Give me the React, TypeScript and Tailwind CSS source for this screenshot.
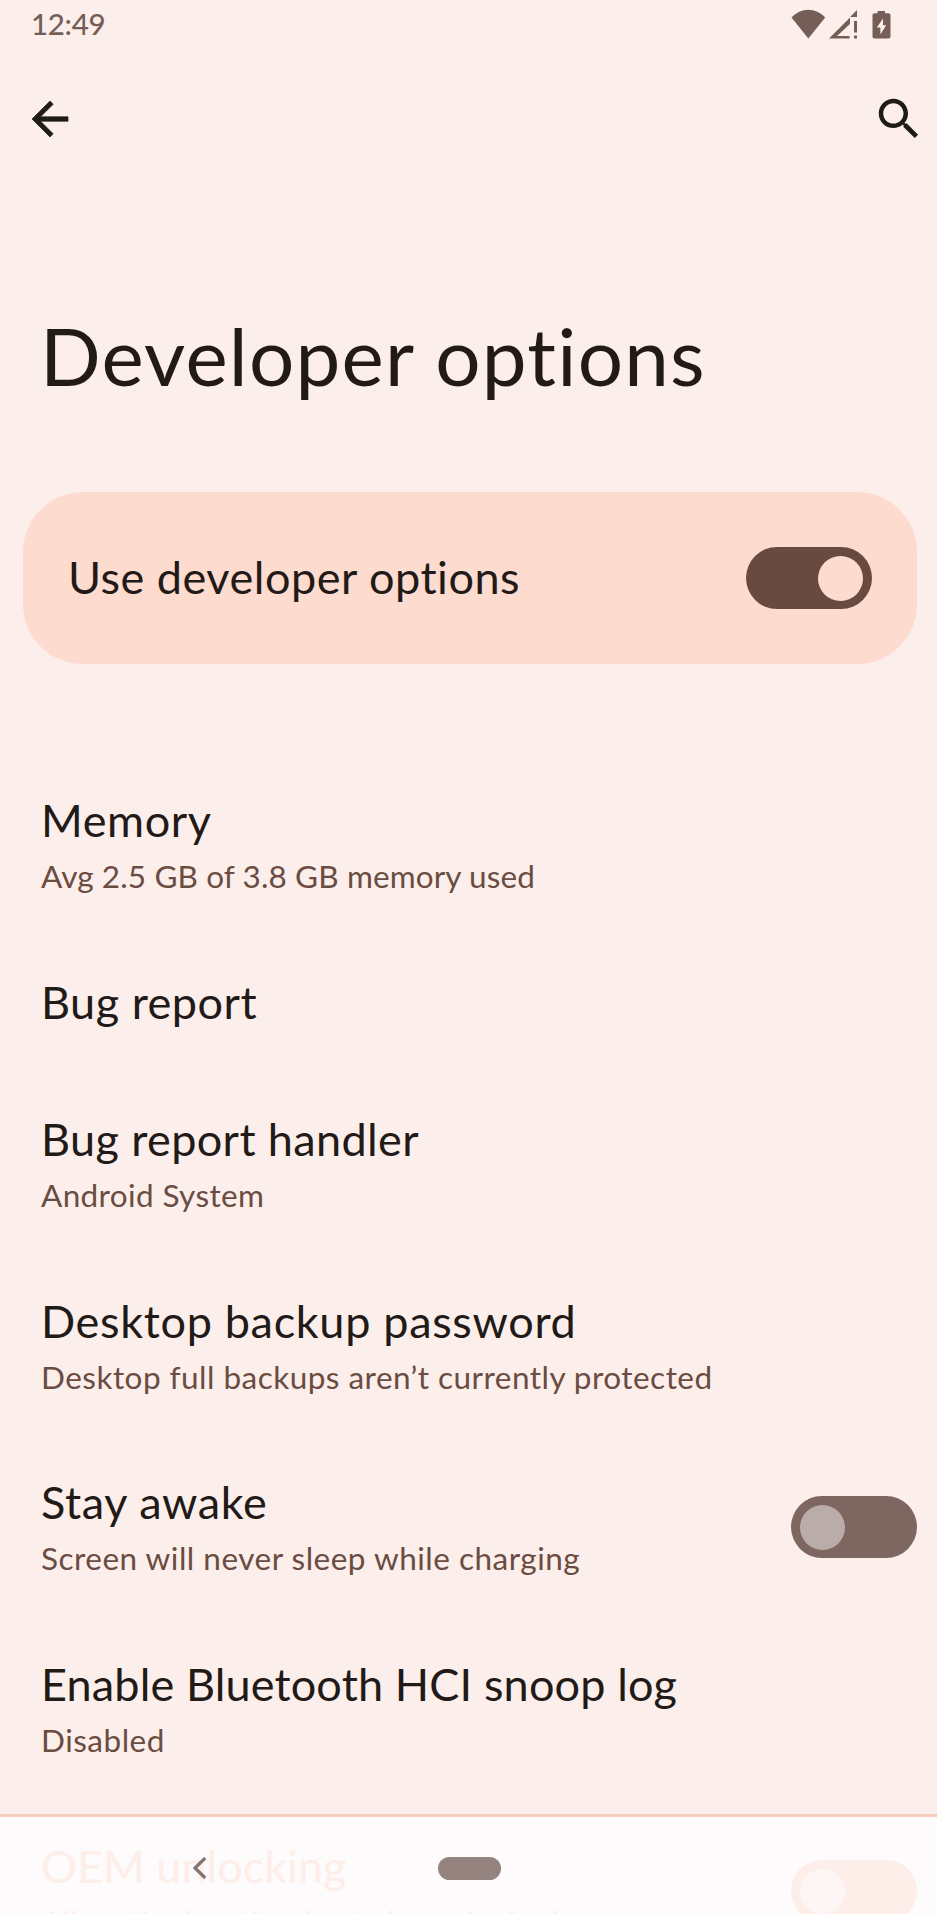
type Option = {
  title: string;
  titleTracking: string;
  summary?: string;
  summaryTracking?: string;
  toggle?: boolean;
};

const options: Option[] = [
  { title: "Memory", titleTracking: "tracking-[0.6px]", summary: "Avg 2.5 GB of 3.8 GB memory used", summaryTracking: "tracking-[0.12px]" },
  { title: "Bug report", titleTracking: "tracking-[0.5px]" },
  { title: "Bug report handler", titleTracking: "tracking-[0.38px]", summary: "Android System", summaryTracking: "tracking-[0.38px]" },
  { title: "Desktop backup password", titleTracking: "tracking-[0.68px]", summary: "Desktop full backups aren’t currently protected", summaryTracking: "tracking-[0.47px]" },
  { title: "Stay awake", titleTracking: "tracking-[0.65px]", summary: "Screen will never sleep while charging", summaryTracking: "tracking-[0.5px]", toggle: true },
  { title: "Enable Bluetooth HCI snoop log", titleTracking: "tracking-[0.15px]", summary: "Disabled", summaryTracking: "tracking-[0.5px]" },
];

function Switch({ on, track, thumb }: { on?: boolean; track: string; thumb: string }) {
  return (
    <div className={`flex h-[62px] w-[126px] shrink-0 items-center rounded-full px-[9px] ${on ? "justify-end" : "justify-start"} ${track}`}>
      <div className={`size-[45px] rounded-full ${thumb}`} />
    </div>
  );
}

function StatusBar() {
  return (
    <div className="flex h-12 items-start justify-between pl-[31px] pr-[46px] text-[#745e57]">
      <span className="pt-[6px] text-[29.5px] font-medium leading-9 tracking-[-0.3px]">12:49</span>
      <svg className="mt-[8px] h-8 w-[101px]" viewBox="0 0 101 32" fill="currentColor">
        <path d="M18.300 30.500 1.500 9.500C6 4.500 12 1.700 18.300 1.700S30.700 4.500 35.200 9.500Z" />
        <path fillRule="evenodd" d="M39 30.500 60 9.500V16L47 28H59.500V30.500Z" />
        <path d="M60 9 67 2V9Z" />
        <path d="M64 13h3v11.500h-3zM64 27.500h3v3h-3z" />
        <path
          fillRule="evenodd"
          d="M84 5.200h3.500V3h7.500v2.200h3.500q2 0 2 2v21.300q0 2-2 2H84.500q-2 0-2-2V7.200q0-2 2-2ZM93 10.500l-6.200 9h3.600v7l5.800-9.300h-3.200Z"
        />
      </svg>
    </div>
  );
}

function AppBar() {
  return (
    <div className="flex h-[142px] items-center justify-between pl-[23px] pr-[11px] text-[#1f1b16]">
      <svg className="size-[54px]" viewBox="0 0 24 24" fill="currentColor">
        <path d="M20 11H7.830l5.590-5.590L12 4l-8 8 8 8 1.410-1.410L7.830 13H20v-2z" stroke="currentColor" strokeWidth="0.3" />
      </svg>
      <svg className="size-[54px]" viewBox="0 0 24 24" fill="currentColor">
        <path d="M15.500 14h-.79l-.28-.27C15.410 12.590 16 11.110 16 9.500 16 5.910 13.090 3 9.500 3S3 5.910 3 9.500 5.910 16 9.500 16c1.610 0 3.090-.59 4.230-1.570l.27.28v.79l5 4.990L20.490 19l-4.990-5zm-6 0C7.010 14 5 11.990 5 9.500S7.010 5 9.500 5 14 7.010 14 9.500 11.990 14 9.500 14z" />
      </svg>
    </div>
  );
}

function OptionRow({ option }: { option: Option }) {
  return (
    <div className={`flex items-start justify-between pl-[41px] pr-5 ${option.summary ? "h-[181.8px]" : "h-[137.1px]"}`}>
      <div className="whitespace-nowrap">
        <div className={`text-[45px] leading-[54px] text-[#211a17] ${option.titleTracking}`}>{option.title}</div>
        {option.summary && (
          <div className={`mt-[10px] text-[31.5px] leading-[38px] text-[#6a4c42] ${option.summaryTracking}`}>{option.summary}</div>
        )}
      </div>
      {option.toggle && (
        <div className="pt-[21px]">
          <Switch track="bg-[#7d6760]" thumb="bg-[#baaca8]" />
        </div>
      )}
    </div>
  );
}

export default function App() {
  return (
    <div className="flex h-[1914px] w-[937px] flex-col overflow-hidden bg-[#fceeea] font-['Lato',sans-serif]">
      <StatusBar />
      <AppBar />
      <h1 className="mt-[117px] h-[96px] shrink-0 whitespace-nowrap pl-10 text-[80px] leading-[96px] tracking-[1.2px] text-[#211a17]">
        Developer options
      </h1>
      <div className="ml-[23px] mr-5 mt-[89px] flex h-[172px] shrink-0 items-center justify-between rounded-[60px] bg-[#fddbcf] pl-[45px] pr-[45px]">
        <span className="whitespace-nowrap pb-[3px] text-[45px] leading-[54px] tracking-[0.52px] text-[#211a17]">Use developer options</span>
        <Switch on track="bg-[#694a40]" thumb="bg-[#fddbcf]" />
      </div>
      <div className="h-[1150px] shrink-0 overflow-hidden pt-[129px]">
        {options.map((option) => (
          <OptionRow key={option.title} option={option} />
        ))}
      </div>
      <div className="relative h-[100px] shrink-0 overflow-hidden border-t-[3px] border-[#f8cfbe] bg-[#fdfbfb]">
        <div className="flex items-start justify-between pl-[41px] pr-5 pt-[22px] text-[#fdeeea]">
          <div className="whitespace-nowrap">
            <div className="text-[45px] leading-[54px]">OEM unlocking</div>
            <div className="mt-[10px] text-[31.5px] leading-[38px] tracking-[0.45px]">Allow the bootloader to be unlocked</div>
          </div>
          <div className="pt-[21px]">
            <Switch track="bg-[#fdeeea]" thumb="bg-[#fdf6f4]" />
          </div>
        </div>
        <svg className="absolute left-[191px] top-[38px] h-[26px] w-[18px]" viewBox="0 0 18 26" fill="none" stroke="#86746e" strokeWidth="3.2">
          <path d="M14.200 3 4 13l10.200 10" />
        </svg>
        <div className="absolute left-[438px] top-[40px] h-[23px] w-[63px] rounded-full bg-[#94837e]" />
      </div>
    </div>
  );
}
